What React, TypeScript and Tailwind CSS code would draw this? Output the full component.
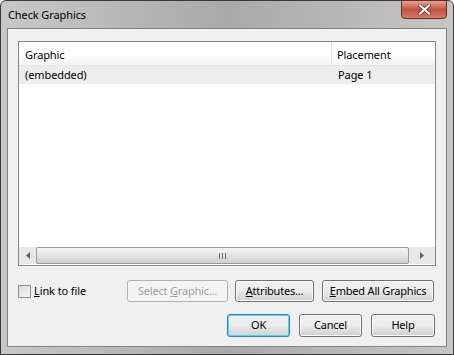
import React from 'react';

const font = { fontFamily: '"Noto Sans", "Open Sans", sans-serif' };

function Btn({ children, w, disabled, def }: { children: React.ReactNode; w: string; disabled?: boolean; def?: boolean }) {
  return (
    <div
      className={`${w} h-[22px] rounded-[3px] border flex items-center justify-center text-[11px] tracking-[-0.2px] ${
        disabled
          ? 'border-[#adb2b5] bg-[#f4f4f4] text-[#a0a0a0]'
          : def
          ? 'border-[#3c7fb1] bg-gradient-to-b from-[#f2f2f2] via-[#ebebeb] to-[#cfcfcf] text-black shadow-[inset_0_0_0_1px_#48d8fb]'
          : 'border-[#707070] bg-gradient-to-b from-[#f2f2f2] via-[#ebebeb] to-[#cfcfcf] text-black shadow-[inset_0_0_0_1px_#fcfcfc]'
      }`}
    >
      <span className="whitespace-pre">{children}</span>
    </div>
  );
}

export default function App() {
  return (
    <div className="w-[454px] h-[355px] overflow-hidden" style={font}>
      <div className="w-[454px] h-[355px] rounded-t-[6px] border border-[#3a3a3a] bg-gradient-to-r from-[#c8c8c8] via-[#a9a9a9] to-[#c6c6c6] flex flex-col">
        {/* Title bar */}
        <div className="h-[27px] flex items-start justify-between pl-[7px] pr-[6px] shrink-0">
          <span className="text-[11px] tracking-[-0.1px] text-black mt-[8px] leading-none">Check Graphics</span>
          <div className="w-[46px] h-[19px] -mt-px rounded-b-[4px] border border-[#6b2a20] bg-gradient-to-b from-[#e2a497] via-[#c4503f] to-[#d37a68] flex items-center justify-center">
            <svg width="13" height="11" viewBox="0 0 13 11">
              <path d="M2 1.5 L11 9.5 M11 1.5 L2 9.5" stroke="#5a2a22" strokeWidth="3.6" strokeLinecap="square" />
              <path d="M2 1.5 L11 9.5 M11 1.5 L2 9.5" stroke="#ffffff" strokeWidth="2.2" strokeLinecap="square" />
            </svg>
          </div>
        </div>
        {/* Client area */}
        <div className="mx-[6px] h-[319px] border border-[#838383] bg-[#f0f0f0] px-[10px] pt-[12px] flex flex-col">
          {/* List view */}
          <div className="w-[418px] h-[225px] border border-[#828790] bg-white flex flex-col text-[11px] tracking-[-0.1px]">
            <div className="h-[24px] flex text-black border-b border-[#e5e5e5] bg-gradient-to-b from-white via-white to-[#f3f4f6]">
              <div className="w-[313px] pl-[6px] pt-[3px] border-r border-[#e5e5e5] flex items-center">Graphic</div>
              <div className="flex-1 pl-[5px] pt-[3px] flex items-center">Placement</div>
            </div>
            <div className="h-[18px] flex text-black bg-[#ededed]">
              <div className="w-[313px] pl-[6px] flex items-center">(embedded)</div>
              <div className="flex-1 pl-[6px] flex items-center">Page 1</div>
            </div>
            <div className="flex-1" />
            {/* Horizontal scrollbar */}
            <div className="h-[17px] flex bg-[#e8e8e8] mb-[1px]">
              <div className="w-[17px] flex items-center justify-center">
                <svg width="4" height="7" viewBox="0 0 4 7"><path d="M4 0 L0 3.5 L4 7 Z" fill="#606060" /></svg>
              </div>
              <div className="w-[373px] h-[17px] rounded-[2px] border border-[#9a9a9a] bg-gradient-to-b from-[#f3f3f3] via-[#e4e4e4] to-[#cfcfcf] flex items-center justify-center">
                <svg width="7" height="8" viewBox="0 0 7 8">
                  <path d="M0.5 1 V7 M3.5 1 V7 M6.5 1 V7" stroke="#6a6a6a" strokeWidth="1" />
                </svg>
              </div>
              <div className="flex-1 flex items-center justify-center">
                <svg width="4" height="7" viewBox="0 0 4 7"><path d="M0 0 L4 3.5 L0 7 Z" fill="#606060" /></svg>
              </div>
            </div>
          </div>
          {/* Row of controls */}
          <div className="mt-[14px] flex items-center h-[22px]">
            <div className="flex items-center w-[109px]">
              <div className="w-[13px] h-[13px] border border-[#8e8f8f] bg-gradient-to-br from-[#dcdcdc] to-[#f6f6f6]" />
              <span className="ml-[3px] text-[11px] tracking-[-0.1px] text-black"><span className="underline">L</span>ink to file</span>
            </div>
            <Btn w="w-[101px]" disabled>Select <span className="underline">G</span>raphic...</Btn>
            <div className="w-[7px]" />
            <Btn w="w-[79px]"><span className="underline">A</span>ttributes...</Btn>
            <div className="w-[8px]" />
            <Btn w="w-[112px]"><span className="underline">E</span>mbed All Graphics</Btn>
          </div>
          <div className="mt-[12px] flex justify-end pr-[1px] gap-[9px] h-[23px]">
            <Btn w="w-[63px] h-[23px]" def>OK</Btn>
            <Btn w="w-[63px] h-[23px]">Cancel</Btn>
            <Btn w="w-[64px] h-[23px]">Help</Btn>
          </div>
        </div>
      </div>
    </div>
  );
}
